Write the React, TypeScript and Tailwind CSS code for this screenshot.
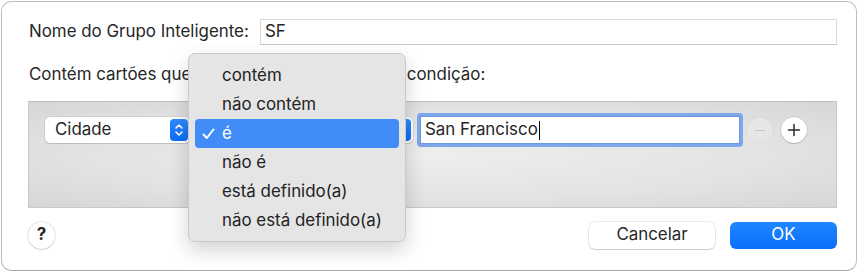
import React from "react";

const font = { fontFamily: "Inter, 'Noto Sans', sans-serif" };

function Stepper() {
  return (
    <span className="flex h-[22px] w-[18px] items-center justify-center rounded-[4px] bg-gradient-to-b from-[#2d8bff] to-[#0a6cf5]">
      <svg width="10" height="16" viewBox="0 0 10 16" fill="none">
        <path d="M2 6 L5 3 L8 6" stroke="white" strokeWidth="1.6" strokeLinecap="round" strokeLinejoin="round" />
        <path d="M2 10 L5 13 L8 10" stroke="white" strokeWidth="1.6" strokeLinecap="round" strokeLinejoin="round" />
      </svg>
    </span>
  );
}

const options = ["contém", "não contém", "é", "não é", "está definido(a)", "não está definido(a)"];

export default function App() {
  return (
    <div className="w-[865px] h-[274px] bg-white p-px text-[16.9px] text-[#262626]" style={font}>
      <div className="relative flex h-[270px] w-[856px] flex-col rounded-[10px] border border-[#bdbdbd] border-b-[#a8a8a8] bg-white pl-[26px] pr-[19px] pt-[17px]">
        {/* name row */}
        <div className="flex h-[26px] items-center">
          <span className="w-[232px] pl-px">Nome do Grupo Inteligente:</span>
          <div className="flex h-[26px] flex-1 items-center border border-[#dadada] border-b-[#c6c6c6] pl-[4px]">
            SF
          </div>
        </div>

        <div className="mt-[19px] h-[20px] whitespace-nowrap pl-px leading-[20px]">
          Contém cartões que{" "}
          <span className="inline-block w-[206px] overflow-hidden align-top">correspondem à seguinte</span>{" "}
          condição:
        </div>

        {/* rule panel */}
        <div className="mt-[17px] h-[107px] border border-[#c8c8c8] border-t-[#bebebe] bg-[radial-gradient(ellipse_at_center,#eeeeee_0%,#e3e3e3_60%,#d6d6d6_100%)] pl-[16px] pt-[11px]">
          <div className="flex h-[34px] items-center">
            <div className="flex h-[26px] w-[145px] items-center justify-between rounded-[5px] bg-white pl-[10px] pr-[2px] shadow-[0_0_0_0.5px_rgba(0,0,0,0.12),0_1px_1px_rgba(0,0,0,0.12)]">
              <span>Cidade</span>
              <Stepper />
            </div>
            <div className="ml-[6px] flex h-[26px] w-[217px] items-center justify-between rounded-[5px] bg-white pl-[10px] pr-[2px] shadow-[0_0_0_0.5px_rgba(0,0,0,0.12),0_1px_1px_rgba(0,0,0,0.12)]">
              <span>é</span>
              <Stepper />
            </div>
            <div className="ml-[4px] h-[34px] w-[326px] rounded-[4px] bg-[#7ea8ec] p-[3px]">
              <div className="flex h-full items-center border border-[#6b98e0] bg-white pl-[4px]">
                <span>San Francisco</span>
                <span className="ml-px h-[19px] w-px bg-black" />
              </div>
            </div>
            <div className="ml-[4px] flex h-[26px] w-[26px] items-center justify-center rounded-full bg-[#e6e6e6] shadow-[0_0_0_0.5px_rgba(0,0,0,0.06)]">
              <span className="h-px w-[10px] bg-[#c4c4c4]" />
            </div>
            <div className="ml-[8px] flex h-[26px] w-[26px] items-center justify-center rounded-full bg-white shadow-[0_0_0_0.5px_rgba(0,0,0,0.15),0_1px_1px_rgba(0,0,0,0.15)]">
              <svg width="14" height="14" viewBox="0 0 14 14">
                <path d="M7 1.5 V12.5 M1.5 7 H12.5" stroke="#2a2a2a" strokeWidth="1.5" strokeLinecap="round" />
              </svg>
            </div>
          </div>
        </div>

        {/* bottom buttons */}
        <div className="mt-[13px] flex h-[28px] items-center">
          <div className="flex h-[27px] w-[27px] items-center justify-center rounded-full bg-white text-[17px] font-bold shadow-[0_0_0_0.5px_rgba(0,0,0,0.18),0_1px_1px_rgba(0,0,0,0.1)]">
            ?
          </div>
          <div className="flex-1" />
          <div className="flex h-[27px] w-[126px] items-center justify-center rounded-[6px] bg-white shadow-[0_0_0_0.5px_rgba(0,0,0,0.15),0_1px_1px_rgba(0,0,0,0.15)]">
            Cancelar
          </div>
          <div className="ml-[15px] flex h-[27px] w-[107px] items-center justify-center rounded-[6px] bg-gradient-to-b from-[#1f86ff] to-[#0a6efa] text-white">
            OK
          </div>
        </div>

        {/* open popup menu */}
        <div className="absolute left-[186px] top-[51px] h-[189px] w-[218px] rounded-[7px] border border-[#c9c9c9] bg-[#e5e5e5] px-[6px] pt-[7px] shadow-[0_8px_20px_rgba(0,0,0,0.18)]">
          {options.map((o, i) => (
            <div
              key={o}
              className={
                i === 2
                  ? "flex h-[29px] items-center rounded-[4px] bg-[#428cf8] text-white"
                  : "flex h-[29px] items-center text-[#222]"
              }
            >
              <span className="flex w-[27px] justify-center">
                {i === 2 && (
                  <svg width="13" height="12" viewBox="0 0 13 12" fill="none">
                    <path d="M1.5 6.5 L4.8 10 L11.5 1.5" stroke="white" strokeWidth="2" strokeLinecap="round" strokeLinejoin="round" />
                  </svg>
                )}
              </span>
              <span>{o}</span>
            </div>
          ))}
        </div>
      </div>
    </div>
  );
}
